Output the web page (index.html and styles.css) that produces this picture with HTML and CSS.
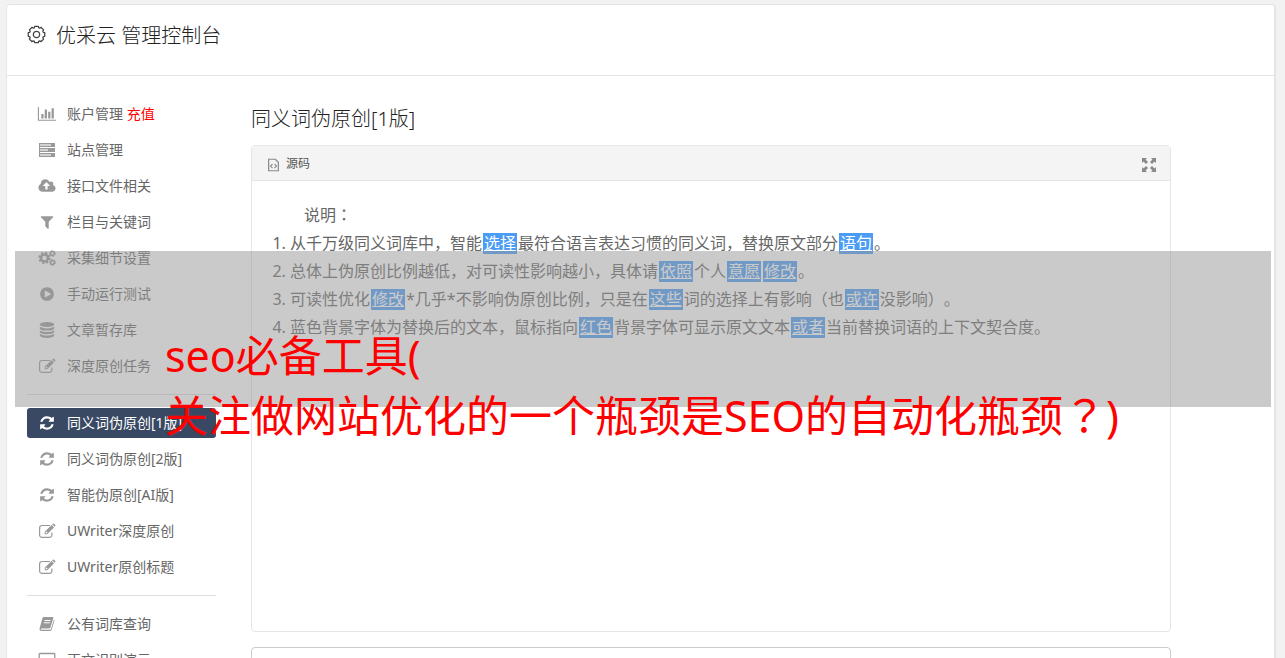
FILE: index.html
```html
<!DOCTYPE html>
<html lang="zh-CN">
<head>
    <meta charset="UTF-8">
    <title>优采云 管理控制台</title>
    <link rel="stylesheet" href="styles.css">
</head>
<body>
    <!-- icons -->
    <svg class="sprite" aria-hidden="true">
        <symbol id="i-chart" viewBox="0 0 2048 1792"><path d="M640 896v512h-256v-512h256zm384-512v1024h-256v-1024h256zm1024 1152v128h-2048v-1536h128v1408h1920zm-640-896v768h-256v-768h256zm384-384v1152h-256v-1152h256z"/></symbol>
        <symbol id="i-server" viewBox="0 0 18 16"><path opacity=".45" d="M1 1h16v4H1zM1 6h16v4H1zM1 11h16v4H1z"/><path d="M1 1h16v1H1zM1 4h16v1H1zM1 6h16v1H1zM1 9h16v1H1zM1 11h16v1H1zM1 14h16v1H1zM1 1h1v14H1zM13 2h4v2h-4zM10 7h7v2h-7zM13 12h4v2h-4z"/></symbol>
        <symbol id="i-cloud" viewBox="0 0 1920 1792"><path d="M1280 864q0-14-9-23l-352-352q-9-9-23-9t-23 9l-351 351q-10 12-10 24 0 14 9 23t23 9h224v352q0 13 9.500 22.500t22.500 9.500h192q13 0 22.500-9.500t9.500-22.500v-352h224q13 0 22.500-9.500t9.500-22.500zm640 288q0 159-112.500 271.500t-271.500 112.500h-1088q-185 0-316.500-131.500t-131.500-316.500q0-130 70-240t188-165q-2-30-2-43 0-212 150-362t362-150q156 0 285.500 87t188.500 231q71-62 166-62 106 0 181 75t75 181q0 76-41 138 130 31 213.500 135.500t83.500 238.500z"/></symbol>
        <symbol id="i-filter" viewBox="0 0 1792 1792"><path d="M1595 295q17 41-14 70l-493 493v742q0 42-39 59-13 5-25 5-27 0-45-19l-256-256q-19-19-19-45v-486l-493-493q-31-29-14-70 17-39 59-39h1280q42 0 59 39z"/></symbol>
        <symbol id="i-gear" viewBox="-9 -9 18 18"><path fill="none" stroke="currentColor" stroke-width="1.200" stroke-linejoin="round" d="M7.800-1.700V1.700L6.400 2.100 6 3 6.700 4.400 4.400 6.700 3 6 2.100 6.400 1.700 7.800H-1.700L-2.100 6.400-3 6-4.400 6.700-6.700 4.400-6 3-6.400 2.100-7.800 1.700V-1.700L-6.400-2.100-6-3-6.700-4.400-4.400-6.700-3-6-2.100-6.400-1.700-7.800H1.700L2.100-6.400 3-6 4.400-6.700 6.700-4.400 6-3 6.400-2.100z"/><circle r="3" fill="none" stroke="currentColor" stroke-width="1.200"/></symbol>
        <symbol id="i-cogs" viewBox="0 0 18 16">
            <g fill="none" stroke="currentColor">
                <circle cx="6.500" cy="8" r="3.500" stroke-width="2.600"/>
                <circle cx="6.500" cy="8" r="5.300" stroke-width="1.800" stroke-dasharray="2.160 2"/>
                <circle cx="14.500" cy="3.500" r="1.900" stroke-width="1.500"/>
                <circle cx="14.500" cy="3.500" r="2.900" stroke-width="1" stroke-dasharray="1.500 1.500"/>
                <circle cx="14.500" cy="12.500" r="1.900" stroke-width="1.500"/>
                <circle cx="14.500" cy="12.500" r="2.900" stroke-width="1" stroke-dasharray="1.500 1.500"/>
            </g>
        </symbol>
        <symbol id="i-play" viewBox="0 0 1792 1792"><path d="M896 128q209 0 385.500 103t279.500 279.500 103 385.500-103 385.500-279.500 279.500-385.500 103-385.500-103-279.500-279.500-103-385.500 103-385.500 279.500-279.500 385.500-103zm384 823q32-18 32-55t-32-55l-544-320q-31-19-64-1-32 19-32 56v640q0 37 32 56 16 8 32 8 17 0 32-9z"/></symbol>
        <symbol id="i-db" viewBox="0 0 16 16"><ellipse cx="8" cy="2.600" rx="7.200" ry="2.500"/><path d="M.8 4.600q2 1.800 7.200 1.800t7.200-1.800V6.400q-1 2.200-7.200 2.200T.8 6.400zM.8 8.200Q2.800 10 8 10t7.200-1.800V10q-1 2.200-7.200 2.200T.8 10zM.8 11.800q2 1.800 7.200 1.800t7.200-1.800v1.800Q14.200 15.900 8 15.900T.8 13.600z"/></symbol>
        <symbol id="i-edit" viewBox="0 0 18 16"><path fill="none" stroke="currentColor" stroke-width="1.200" d="M12 2.500H4A2.400 2.400 0 0 0 1.600 5v7A2.400 2.400 0 0 0 4 14.400h7.500A2.400 2.400 0 0 0 13.900 12V9.500"/><path fill-rule="evenodd" d="M13.600 2 16 4.400 9.200 11.200H6.700V8.800zM7.700 9.100v1.200h1.100L9.500 9.500 8.500 8.400zM14.200 1.400l.7-.7q.6-.5 1.200 0l1.200 1.200q.5.600 0 1.200l-.7.700z"/></symbol>
        <symbol id="i-refresh" viewBox="0 0 1792 1792"><path d="M1639 1056q0 5-1 7-64 268-268 434.500t-478 166.500q-146 0-282.500-55t-243.500-157l-129 129q-19 19-45 19t-45-19-19-45v-448q0-26 19-45t45-19h448q26 0 45 19t19 45-19 45l-137 137q71 66 161 102t187 36q134 0 250-65t186-179q11-17 53-117 8-23 30-23h192q13 0 22.500 9.500t9.500 22.500zm25-800v448q0 26-19 45t-45 19h-448q-26 0-45-19t-19-45 19-45l138-138q-148-137-349-137-134 0-250 65t-186 179q-11 17-53 117-8 23-30 23h-199q-13 0-22.500-9.500t-9.500-22.500v-7q65-268 270-434.500t480-166.500q146 0 284 55.500t245 156.500l130-129q19-19 45-19t45 19 19 45z"/></symbol>
        <symbol id="i-book" viewBox="0 0 18 16"><path fill-rule="evenodd" d="M6 1h8.500q1.200 0 .8 1.300L12.400 11.500q-.3.900-1.300.9H3.600q-.8 0-.8.700t.9.600H12q.6 0 .8-.5L16 3.500q.6.400.4 1.200L13.600 13.800q-.4 1.200-1.700 1.200H3.500Q1.300 15 1.500 12.700L4.400 2.200Q4.800 1 6 1zM6.700 4l-.3 1h6l.3-1zM6 6.300l-.3 1h6l.3-1z"/></symbol>
        <symbol id="i-laptop" viewBox="0 0 18 16"><path fill="none" stroke="currentColor" stroke-width="1.300" d="M2 1.500h14q.8 0 .8.800v8.500H1.200V2.300q0-.8.800-.8z"/><path d="M0 12h18v1.500H0z"/></symbol>
        <symbol id="i-source" viewBox="0 0 12 14"><path fill="none" stroke="currentColor" stroke-width="1.300" d="M.7.700h7.200l3.400 3.400v9.200H.7zM4.900 6 2.800 8.200l2.100 2.200M7.100 6l2.100 2.200-2.100 2.200"/></symbol>
        <symbol id="i-expand" viewBox="0 0 14 14"><path d="M0 0h5L3.500 1.500 6 4 4 6 1.500 3.500 0 5zM14 0v5l-1.500-1.500L10 6 8 4l2.500-2.500L9 0zM0 14V9l1.500 1.500L4 8l2 2-2.500 2.500L5 14zM14 14H9l1.500-1.500L8 10l2-2 2.500 2.500L14 9z"/></symbol>
    </svg>

    <div class="wrap">
        <header class="top">
            <svg class="gear"><use href="#i-gear"/></svg>
            <h1>优采云 管理控制台</h1>
        </header>

        <div class="content">
            <nav class="side">
                <ul>
                    <li><a href="#"><svg><use href="#i-chart"/></svg><span>账户管理 <em>充值</em></span></a></li>
                    <li><a href="#"><svg><use href="#i-server"/></svg>站点管理</a></li>
                    <li><a href="#"><svg><use href="#i-cloud"/></svg>接口文件相关</a></li>
                    <li><a href="#"><svg><use href="#i-filter"/></svg>栏目与关键词</a></li>
                    <li><a href="#"><svg><use href="#i-cogs"/></svg>采集细节设置</a></li>
                    <li><a href="#"><svg><use href="#i-play"/></svg>手动运行测试</a></li>
                    <li><a href="#"><svg><use href="#i-db"/></svg>文章暂存库</a></li>
                    <li><a href="#"><svg><use href="#i-edit"/></svg>深度原创任务</a></li>
                    <li class="line"></li>
                    <li><a href="#" class="active"><svg><use href="#i-refresh"/></svg>同义词伪原创[1版]</a></li>
                    <li><a href="#"><svg><use href="#i-refresh"/></svg>同义词伪原创[2版]</a></li>
                    <li><a href="#"><svg><use href="#i-refresh"/></svg>智能伪原创[AI版]</a></li>
                    <li><a href="#"><svg><use href="#i-edit"/></svg>UWriter深度原创</a></li>
                    <li><a href="#"><svg><use href="#i-edit"/></svg>UWriter原创标题</a></li>
                    <li class="line"></li>
                    <li><a href="#"><svg><use href="#i-book"/></svg>公有词库查询</a></li>
                    <li><a href="#"><svg><use href="#i-laptop"/></svg>正文识别演示</a></li>
                </ul>
            </nav>

            <main>
                <h2>同义词伪原创[1版]</h2>
                <div class="editor">
                    <div class="toolbar">
                        <button type="button"><svg class="source"><use href="#i-source"/></svg>源码</button>
                        <button type="button" aria-label="全屏"><svg class="expand"><use href="#i-expand"/></svg></button>
                    </div>
                    <div class="text">
                        <p>说明<span class="mid" lang="zh-TW">：</span></p>
                        <ol>
                            <li>从千万级同义词库中，智能<u>选择</u>最符合语言表达习惯的同义词，替换原文部分<u>语句</u>。</li>
                            <li>总体上伪原创比例越低，对可读性影响越小，具体请<u>依照</u>个人<u>意愿</u><u>修改</u>。</li>
                            <li>可读性优化<u>修改</u>*几乎*不影响伪原创比例，只是在<u>这些</u>词的选择上有影响（也<u>或许</u>没影响）。</li>
                            <li>蓝色背景字体为替换后的文本，鼠标指向<u>红色</u>背景字体可显示原文文本<u>或者</u>当前替换词语的上下文契合度。</li>
                        </ol>
                    </div>
                </div>
                <textarea class="result" aria-label="结果"></textarea>
            </main>
        </div>
    </div>

    <div class="banner">seo必备工具(<br>关注做网站优化的一个瓶颈是SEO的自动化瓶颈<span class="mid" lang="zh-TW">？</span>)</div>
</body>
</html>
```
FILE: styles.css
```css
* {
    box-sizing: border-box;
}
body {
    margin: 0;
    padding: 4px 9px 0 6px;
    height: 100vh;
    overflow: hidden;
    background: #f2f2f2;
    color: #666;
    font: 14px/30px "Noto Sans", "Noto Sans CJK SC", sans-serif;
    text-spacing-trim: space-all;
}
.sprite {
    display: none;
}
svg {
    fill: currentColor;
    flex: none;
}
ul, ol, p, h1, h2 {
    margin: 0;
    padding: 0;
}
h1, h2 {
    color: #222;
    font-size: 20px;
    font-weight: 300;
}
/* full-width punctuation centred in its box */
.mid {
    font-family: "Noto Sans CJK TC", sans-serif;
    line-height: 1;
}

.wrap {
    background: #fff;
    border: 1px solid #e5e5e5;
    border-right-width: 2px;
    border-radius: 4px;
}
.top {
    display: flex;
    align-items: center;
    gap: 10px;
    height: 71px;
    padding: 0 20px 8px;
    border-bottom: 1px solid #e5e5e5;
}
.gear {
    width: 19px;
    height: 19px;
    margin-bottom: 4px;
    color: #444;
}

.content {
    display: flex;
    gap: 35px;
    padding: 23px 103px 30px 20px;
}
.side {
    flex: none;
    width: 189px;
}
.side ul {
    display: flex;
    flex-direction: column;
    gap: 6px;
    list-style: none;
}
.side a {
    display: flex;
    align-items: center;
    gap: 10px;
    height: 30px;
    padding: 0 10px;
    border-radius: 3px;
    color: #666;
    text-decoration: none;
    white-space: nowrap;
}
.side svg {
    width: 20px;
    height: 16px;
    color: #999;
}
.side em {
    color: red;
    font-style: normal;
}
.side .active,
.side .active svg {
    color: #fff;
}
.side .active {
    background: #394963;
}
.side .line {
    height: 1px;
    margin: 7px 0;
    background: #ddd;
}

main {
    flex: 1;
    min-width: 0;
}
h2 {
    padding: 5px 0 11px;
}
.editor {
    height: 487px;
    margin-bottom: 15px;
    border: 1px solid #e5e5e5;
    border-radius: 4px;
}
.toolbar {
    display: flex;
    justify-content: space-between;
    height: 35px;
    padding: 2px 14px 0 16px;
    background: #f4f4f4;
    border-bottom: 1px solid #e5e5e5;
}
.toolbar button {
    display: flex;
    align-items: center;
    gap: 7px;
    padding: 0;
    border: 0;
    background: none;
    color: #555;
    font: inherit;
    font-size: 12px;
}
.toolbar svg {
    margin-top: 2px;
    color: #888;
}
.source {
    width: 11px;
    height: 14px;
}
.expand {
    width: 14px;
    height: 14px;
}
.text {
    padding: 20px;
    font-size: 16px;
    line-height: 28px;
}
.text p {
    text-indent: 32px;
}
.text ol {
    padding-left: 18px;
}
.text u {
    display: inline-block;
    margin: 0 1px;
    padding: 0 1px;
    background: #4b9cf5;
    color: #fff;
    line-height: 21px;
}
.result {
    display: block;
    width: 100%;
    height: 200px;
    border: 1px solid #ccc;
    border-radius: 4px;
    resize: none;
}

/* grey strip over the page, the second line hangs below it */
.banner {
    position: absolute;
    top: 251px;
    left: 15px;
    right: 14px;
    height: 156px;
    padding: 75px 0 0 150px;
    background: rgba(150, 150, 150, 0.5);
    color: red;
    font-size: 43px;
    line-height: 60px;
    white-space: nowrap;
}
```
